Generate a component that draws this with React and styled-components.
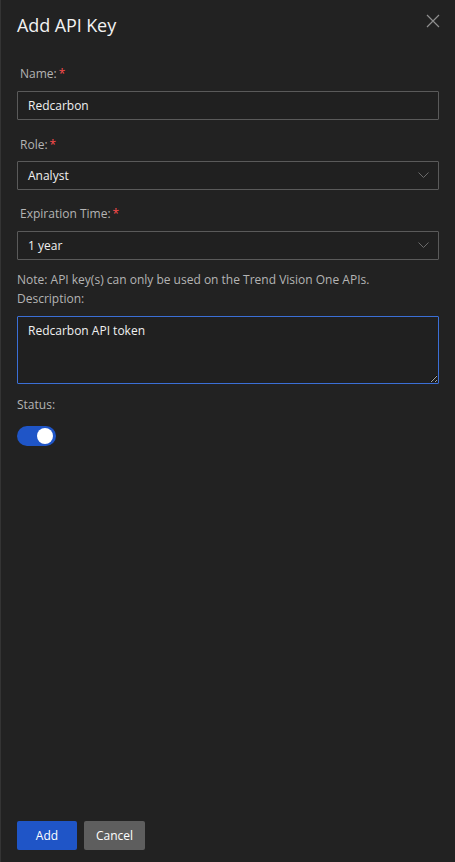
import React, { useState } from 'react';
import styled, { createGlobalStyle } from 'styled-components';

const GlobalStyle = createGlobalStyle`
  html, body {
    margin: 0;
    padding: 0;
    background: #222222;
  }
  * { box-sizing: border-box; }
`;

const Panel = styled.div`
  width: 455px;
  height: 862px;
  background: #222222;
  border-left: 1px solid #343434;
  display: flex;
  flex-direction: column;
  font-family: 'Open Sans', 'Noto Sans', sans-serif;
  color: #e6e6e6;
`;

const Header = styled.div`
  display: flex;
  justify-content: space-between;
  align-items: flex-start;
  padding: 13px 16px 0 16px;
  height: 65px;
`;

const Title = styled.h1`
  margin: 0;
  font-size: 18px;
  font-weight: 400;
  line-height: 24px;
  color: #f2f2f2;
  letter-spacing: -0.1px;
`;

const CloseButton = styled.button`
  background: none;
  border: none;
  padding: 0;
  margin-top: 1px;
  margin-right: -1px;
  width: 14px;
  height: 14px;
  cursor: pointer;
  display: flex;
`;

const Body = styled.div`
  flex: 1;
  padding: 0 16px;
  display: flex;
  flex-direction: column;
`;

const Field = styled.div`
  display: flex;
  flex-direction: column;
  margin-bottom: ${(p) => p.$mb || 0}px;
`;

const Label = styled.label`
  font-size: 12px;
  color: #b4b4b4;
  height: 18px;
  line-height: 18px;
  margin-bottom: ${(p) => p.$mb ?? 8}px;
  padding-left: ${(p) => (p.$indent ? 3 : 0)}px;
`;

const Required = styled.span`
  color: #ff4d4d;
  margin-left: 2px;
`;

const TextInput = styled.input`
  height: 29px;
  width: 100%;
  background: #202020;
  border: 1px solid #5a5a5a;
  border-radius: 1px;
  color: #f0f0f0;
  font-family: inherit;
  font-size: 12px;
  padding: 0 10px;
  outline: none;
`;

const SelectBox = styled.div`
  height: 29px;
  width: 100%;
  background: #202020;
  border: 1px solid #5a5a5a;
  border-radius: 1px;
  display: flex;
  align-items: center;
  justify-content: space-between;
  padding: 0 9px 0 10px;
  font-size: 12px;
  color: #f0f0f0;
`;

const Note = styled.div`
  font-size: 12px;
  color: #b4b4b4;
  line-height: 20px;
`;

const TextArea = styled.textarea`
  width: 100%;
  height: 68px;
  background: #202020;
  border: 1px solid #3b6fd6;
  border-radius: 1px;
  color: #f0f0f0;
  font-family: inherit;
  font-size: 12px;
  padding: 5px 10px;
  outline: none;
  resize: vertical;
  margin-top: 8px;
`;

const Toggle = styled.button`
  width: 39px;
  height: 20px;
  border-radius: 10px;
  border: none;
  padding: 2px;
  background: ${(p) => (p.$on ? '#1f55c7' : '#555')};
  display: flex;
  justify-content: ${(p) => (p.$on ? 'flex-end' : 'flex-start')};
  cursor: pointer;
`;

const Knob = styled.span`
  width: 16px;
  height: 16px;
  border-radius: 50%;
  background: #ffffff;
  margin-right: 1px;
`;

const Footer = styled.div`
  display: flex;
  gap: 7px;
  padding: 0 16px 12px 16px;
`;

const Button = styled.button`
  height: 29px;
  width: ${(p) => p.$w}px;
  padding: 0;
  border: none;
  border-radius: 2px;
  font-family: inherit;
  font-size: 12px;
  color: #ffffff;
  background: ${(p) => (p.$primary ? '#1f55c7' : '#5e5e5e')};
  cursor: pointer;
`;

const Chevron = () => (
  <svg width="11" height="7" viewBox="0 0 11 7">
    <path d="M0.5 0.5 L5.5 5.5 L10.5 0.5" fill="none" stroke="#6b6b6b" strokeWidth="1" />
  </svg>
);

const CloseIcon = () => (
  <svg width="14" height="14" viewBox="0 0 14 14">
    <path d="M1 1 L13 13 M13 1 L1 13" stroke="#8f8f8f" strokeWidth="1.2" />
  </svg>
);

const App = () => {
  const [on, setOn] = useState(true);
  return (
    <>
      <GlobalStyle />
      <Panel>
        <Header>
          <Title>Add API Key</Title>
          <CloseButton aria-label="Close">
            <CloseIcon />
          </CloseButton>
        </Header>
        <Body>
          <Field $mb={16}>
            <Label $indent>
              Name:<Required>*</Required>
            </Label>
            <TextInput defaultValue="Redcarbon" />
          </Field>
          <Field $mb={15}>
            <Label $indent $mb={7}>
              Role:<Required>*</Required>
            </Label>
            <SelectBox>
              <span>Analyst</span>
              <Chevron />
            </SelectBox>
          </Field>
          <Field $mb={10}>
            <Label $indent>
              Expiration Time:<Required>*</Required>
            </Label>
            <SelectBox>
              <span>1 year</span>
              <Chevron />
            </SelectBox>
          </Field>
          <Note>Note: API key(s) can only be used on the Trend Vision One APIs.</Note>
          <Field $mb={12}>
            <Label $mb={0}>Description:</Label>
            <TextArea defaultValue="Redcarbon API token" />
          </Field>
          <Field>
            <Label $mb={12}>Status:</Label>
            <Toggle $on={on} onClick={() => setOn(!on)} aria-label="Status">
              <Knob />
            </Toggle>
          </Field>
        </Body>
        <Footer>
          <Button $primary $w={60}>Add</Button>
          <Button $w={61}>Cancel</Button>
        </Footer>
      </Panel>
    </>
  );
};

export default App;
